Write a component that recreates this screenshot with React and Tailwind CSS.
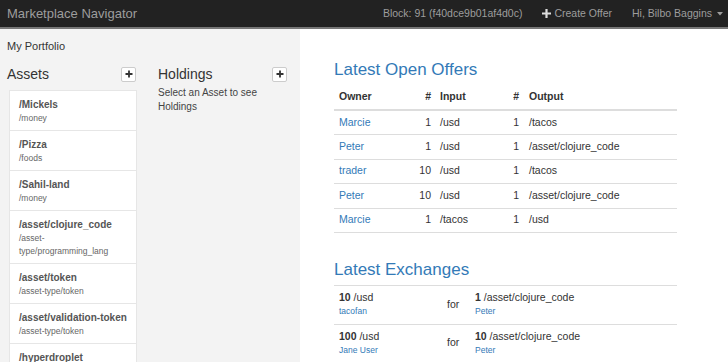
import React from "react";

const assets = [
  { name: "/Mickels", type: ["/money"] },
  { name: "/Pizza", type: ["/foods"] },
  { name: "/Sahil-land", type: ["/money"] },
  { name: "/asset/clojure_code", type: ["/asset-", "type/programming_lang"] },
  { name: "/asset/token", type: ["/asset-type/token"] },
  { name: "/asset/validation-token", type: ["/asset-type/token"] },
  { name: "/hyperdroplet", type: ["/asset-type/token"] },
];

const offers = [
  { owner: "Marcie", inN: 1, input: "/usd", outN: 1, output: "/tacos" },
  { owner: "Peter", inN: 1, input: "/usd", outN: 1, output: "/asset/clojure_code" },
  { owner: "trader", inN: 10, input: "/usd", outN: 1, output: "/tacos" },
  { owner: "Peter", inN: 10, input: "/usd", outN: 1, output: "/asset/clojure_code" },
  { owner: "Marcie", inN: 1, input: "/tacos", outN: 1, output: "/usd" },
];

const exchanges = [
  { a: "10", aa: "/usd", aw: "tacofan", b: "1", ba: "/asset/clojure_code", bw: "Peter" },
  { a: "100", aa: "/usd", aw: "Jane User", b: "10", ba: "/asset/clojure_code", bw: "Peter" },
];

const PlusBtn = () => (
  <button className="w-[15px] h-[15px] flex items-center justify-center bg-white border border-[#ccc] rounded-[2px] text-[#333]">
    <svg width="8" height="8" viewBox="0 0 8 8">
      <path d="M4 0.5v7M0.5 4h7" stroke="currentColor" strokeWidth="1.8" />
    </svg>
  </button>
);

const App = () => {
  return (
    <div
      className="w-[728px] h-[362px] overflow-hidden flex flex-col bg-white text-[#333]"
      style={{ fontFamily: '"Liberation Sans", Arial, sans-serif' }}
    >
      {/* Navbar */}
      <div className="h-[29px] shrink-0 bg-[#222] border-b-2 border-[#777] flex items-center pl-[7px] pr-[5px] text-[#9d9d9d]">
        <span className="text-[13px]">Marketplace Navigator</span>
        <div className="ml-auto flex items-center text-[10.5px]">
          <span>Block: 91 (f40dce9b01af4d0c)</span>
          <span className="ml-[20px] flex items-center gap-[3px]">
            <svg width="9" height="9" viewBox="0 0 9 9">
              <path d="M4.5 0v9M0 4.5h9" stroke="#ddd" strokeWidth="2.2" />
            </svg>
            Create Offer
          </span>
          <span className="ml-[20px] flex items-center gap-[5px]">
            Hi, Bilbo Baggins
            <svg width="6" height="4" viewBox="0 0 6 4">
              <path d="M0 0h6L3 3.5z" fill="#9d9d9d" />
            </svg>
          </span>
        </div>
      </div>

      <div className="flex flex-1 min-h-0">
        {/* Portfolio sidebar */}
        <div className="w-[300px] shrink-0 bg-[#f3f3f3] px-[7px] pt-[10px]">
          <p className="text-[11px] leading-[14px]">My Portfolio</p>
          <div className="flex gap-[21px] mt-[12px]">
            <div className="w-[130px]">
              <div className="flex items-center justify-between pr-[1px] h-[18px]">
                <h4 className="text-[14px]">Assets</h4>
                <PlusBtn />
              </div>
              <div className="mt-[7px] ml-[2px] w-[128px] flex flex-col gap-[1px] bg-[#e6e6e6] border border-[#e6e6e6]">
                {assets.map((a) => (
                  <div key={a.name} className="bg-white pl-[9px] pr-[4px] pt-[6px] pb-[5px]">
                    <p className="text-[10px] font-bold leading-[15px] text-[#555] whitespace-nowrap">{a.name}</p>
                    {a.type.map((t) => (
                      <p key={t} className="text-[8.5px] leading-[13px] text-[#666]">{t}</p>
                    ))}
                  </div>
                ))}
              </div>
            </div>
            <div className="w-[130px]">
              <div className="flex items-center justify-between pr-[1px] h-[18px]">
                <h4 className="text-[14px]">Holdings</h4>
                <PlusBtn />
              </div>
              <p className="mt-[3px] text-[10px] leading-[14px] text-[#444] w-[110px]">
                Select an Asset to see Holdings
              </p>
            </div>
          </div>
        </div>

        {/* Main */}
        <div className="flex-1 pl-[34px] pt-[30px]">
          <h3 className="text-[17px] leading-[22px] text-[#337ab7]">Latest Open Offers</h3>
          <table className="mt-[4px] w-[343px] text-[10.5px] border-collapse">
            <thead>
              <tr className="border-b-2 border-[#ddd] h-[25px]">
                <th className="text-left font-bold pl-[5px]">Owner</th>
                <th className="text-right font-bold pr-[9px]">#</th>
                <th className="text-left font-bold">Input</th>
                <th className="text-right font-bold pr-[10px]">#</th>
                <th className="text-left font-bold">Output</th>
              </tr>
            </thead>
            <tbody>
              {offers.map((o, i) => (
                <tr key={i} className="border-b border-[#ddd] h-[24.5px]">
                  <td className="pl-[5px] w-[84px] text-[#337ab7]">{o.owner}</td>
                  <td className="text-right pr-[9px] w-[22px]">{o.inN}</td>
                  <td className="w-[70px]">{o.input}</td>
                  <td className="text-right pr-[10px] w-[19px]">{o.outN}</td>
                  <td>{o.output}</td>
                </tr>
              ))}
            </tbody>
          </table>

          <h3 className="mt-[26px] text-[17px] leading-[22px] text-[#337ab7]">Latest Exchanges</h3>
          <table className="mt-[4px] w-[343px] text-[10.5px] border-collapse border-t border-[#ddd]">
            <tbody>
              {exchanges.map((e, i) => (
                <tr key={i} className="border-b border-[#ddd] h-[38.5px]">
                  <td className="pl-[5px] w-[113px] align-middle">
                    <p className="leading-[13px]"><b>{e.a}</b> {e.aa}</p>
                    <p className="text-[8.5px] leading-[14px] text-[#337ab7]">{e.aw}</p>
                  </td>
                  <td className="w-[28px] align-middle">for</td>
                  <td className="align-middle">
                    <p className="leading-[13px]"><b>{e.b}</b> {e.ba}</p>
                    <p className="text-[8.5px] leading-[14px] text-[#337ab7]">{e.bw}</p>
                  </td>
                </tr>
              ))}
            </tbody>
          </table>
        </div>
      </div>
    </div>
  );
};

export default App;
